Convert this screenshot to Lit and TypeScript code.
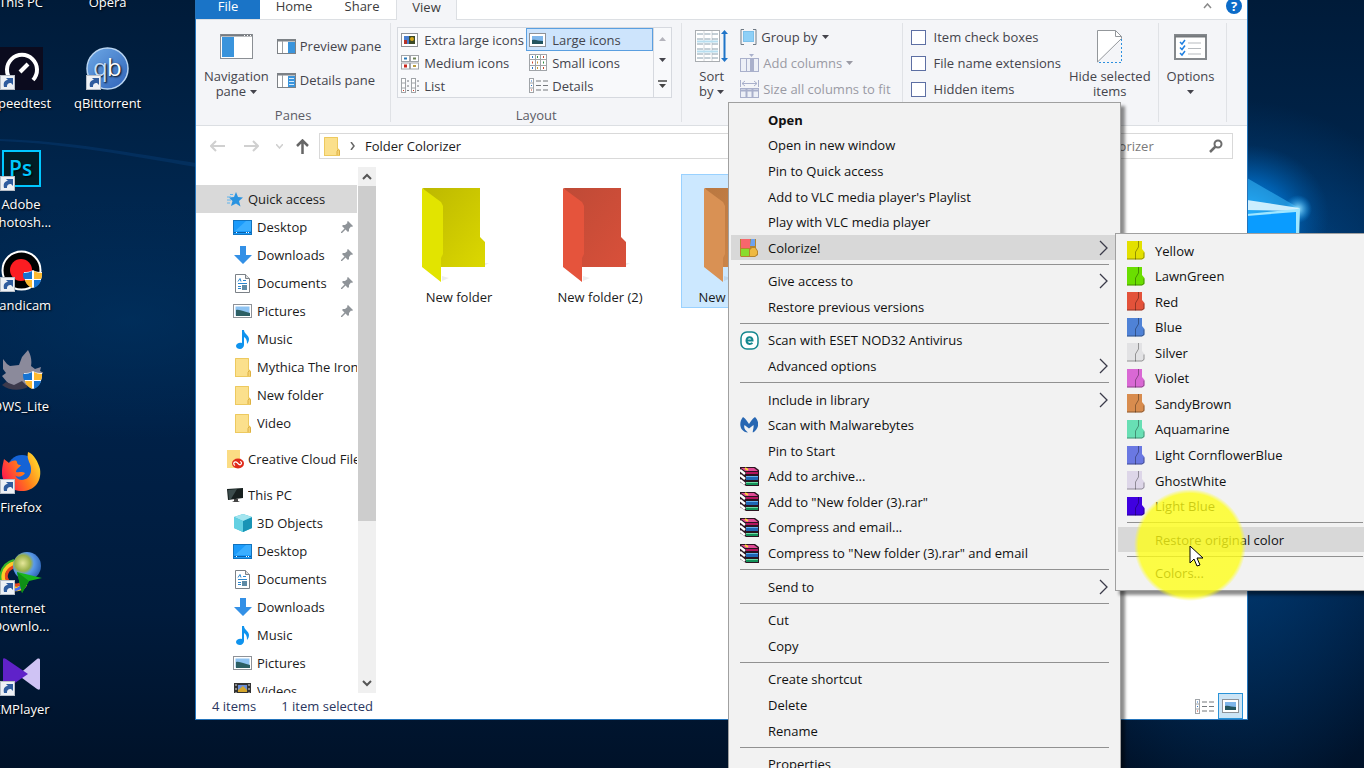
import { LitElement, html, css, svg, nothing, TemplateResult } from "lit";
import { customElement, property } from "lit/decorators.js";
import { classMap } from "lit/directives/class-map.js";

/* ---------- icons ---------- */

const pic = (w: number, h: number, body: unknown, vb = `0 0 ${w} ${h}`) =>
  html`<svg width=${w} height=${h} viewBox=${vb} aria-hidden="true">${body}</svg>`;

const shortcutArrow = svg`
  <rect x=".5" y="28.500" width="14" height="14" fill="#eef1f5" stroke="#b8bec6"/>
  <path d="M4 40c-1-5 1-7 4-7l-2-2h7v7l-2-2c-3 0-4 1-4 4z" fill="#2f5c9e"/>`;
const uacShield = svg`
  <path d="M33 21c3 2 6 2 9 2 0 8-2 13-9 16-7-3-9-8-9-16 3 0 6 0 9-2z" fill="#fff"/>
  <path d="M32 22v8h-8c-1-2-1-4-1-6 4 0 7-1 9-2zM34 31h7c-1 4-3 6-7 8z" fill="#1673d1"/>
  <path d="M34 22c2 1 5 2 8 2 0 2 0 4-1 6h-7zM32 31v8c-4-2-6-4-7-8z" fill="#fdb92e"/>`;

const desktopIcons: Record<string, unknown> = {
  speedtest: svg`<rect width="43" height="43" fill="#0b0b1e"/>
    <path d="M11 33a15 15 0 1 1 22 0" fill="none" stroke="#fff" stroke-width="4"/>
    <path d="M20 25l8-8" stroke="#fff" stroke-width="4"/>${shortcutArrow}`,
  qb: svg`<defs><linearGradient id="q" x1="0" y1="0" x2="1" y2="1"><stop offset="0" stop-color="#6ea9e6"/><stop offset="1" stop-color="#2e62b8"/></linearGradient></defs>
    <circle cx="21.500" cy="21.500" r="20.500" fill="url(#q)" stroke="#b9d5f2" stroke-width="1.500"/>
    <text x="7" y="29" font-family="Open Sans, sans-serif" font-size="24" fill="#c5dffa">q</text>
    <text x="21" y="29" font-family="Open Sans, sans-serif" font-size="24" fill="#fff">b</text>${shortcutArrow}`,
  ps: svg`<rect x="3" y="3" width="37" height="35" fill="#001d26" stroke="#00c8ff" stroke-width="2"/>
    <text x="9" y="28" font-family="Open Sans, sans-serif" font-weight="600" font-size="21" fill="#00c8ff">Ps</text>${shortcutArrow}`,
  bandicam: svg`<circle cx="21.500" cy="21.500" r="19" fill="#000" stroke="#fff" stroke-width="2"/>
    <circle cx="21" cy="21" r="11" fill="#fb1d22"/>${uacShield}${shortcutArrow}`,
  dws: svg`<path d="M3 9l4 5 3 2 9-1 3-8 6-7c3 5 4 11 3 16l4 3 6-2-1 4 4 2-9 3-4 7c-8 6-18 5-24-1L2 26l4-3-3-4z" fill="#8b8a9b"/>
    <path d="M2 35c8 6 18 6 26 2l-6-6-8 4-8-3z" fill="#3c3a4c"/>${uacShield}`,
  firefox: svg`<defs><linearGradient id="f" x1="0" y1="0.700" x2="1" y2="0.200"><stop offset="0" stop-color="#ff1450"/><stop offset=".5" stop-color="#ff7a1a"/><stop offset="1" stop-color="#ffe22e"/></linearGradient></defs>
    <circle cx="22" cy="19" r="15" fill="#1463d6"/>
    <path d="M4 8l5 4c4-3 7-3 8-1 0 3 3 3 4 3-2 3-5 4-5 7 3 1 6-1 9 1-3 5-9 4-10 2 3 8 15 6 16-4 1-8-5-10-3-19 6 2 10 10 12 17 2 14-7 22-18 22S2 32 2 22c0-6 1-9 2-14z" fill="url(#f)"/>${shortcutArrow}`,
  idm: svg`<defs><radialGradient id="i" cx=".35" cy=".4" r=".8"><stop offset="0" stop-color="#e6e79a"/><stop offset=".35" stop-color="#9ab04a"/><stop offset=".5" stop-color="#5a9ae8"/><stop offset="1" stop-color="#1d4fa0"/></radialGradient></defs>
    <path d="M16 11C2 14-1 26 7 33s16 3 18-1" fill="none" stroke="#ffc928" stroke-width="5"/>
    <path d="M17 14C6 16 4 25 9 30s11 3 14 0" fill="none" stroke="#e8461e" stroke-width="3"/>
    <path d="M14 8C0 12-4 28 6 36" fill="none" stroke="#35b52a" stroke-width="2"/>
    <path d="M4 32c4 7 12 8 18 2" fill="none" stroke="#4a6df0" stroke-width="3"/>
    <circle cx="27" cy="14" r="14" fill="url(#i)"/>
    <path d="M17 20l25 6-13 3-7 12z" fill="#18b51c"/><path d="M17 20l12 9-7 12z" fill="#0e8f16"/>${shortcutArrow}`,
  km: svg`<path d="M40 7v28c0 2-1 2-3 1L18 22 37 6c2-1 3 0 3 1z" fill="#cfc3f4"/>
    <path d="M3 7v28c0 2 1 2 3 1l22-15L6 6C4 5 3 5 3 7z" fill="#5f22c9"/>${shortcutArrow}`,
};

const tiny: Record<string, TemplateResult> = {
  star: pic(16, 16, svg`<path d="M9 1l2 5 5 .500-4 3.500 1.500 5.500L9 12.500 4 15l1.500-5L2 6.500 7 6z" fill="#2a93e0"/><path d="M0 6h4M0 9h4M0 12h3M3 3.500h3" stroke="#5fb4ee"/>`),
  desktop: pic(19, 15, svg`<rect x=".5" y=".5" width="18" height="14" fill="#1b9bfb" stroke="#1273be"/><path d="M1 12.500h17" stroke="#0a62ab"/><path d="M2 11L13 1h5v10z" fill="#3aaeff"/><path d="M3 12.500h1M13 12.500h1M15 12.500h1" stroke="#fff"/>`),
  down: pic(18, 18, svg`<path d="M6 0h6v9h6l-9 9-9-9h6z" fill="#3390e6"/>`),
  doc: pic(15, 19, svg`<path d="M.5.5h10l4 4v14H.5z" fill="#fff" stroke="#7b8187"/><path d="M10.500.5v4h4" fill="#ddd" stroke="#7b8187"/><path d="M3 7.500l2-3 1 3M8 6.500h3M3 9.500h9M3 12.500h3M3 14.500h3" stroke="#2b87cf" fill="none"/><rect x="7" y="11" width="5" height="5" fill="#5f8ba5"/>`),
  picture: pic(19, 14, svg`<rect x=".5" y=".5" width="18" height="13" fill="#fff" stroke="#8e9298"/><rect x="2.500" y="2.500" width="14" height="9" fill="#8ec3f2"/><path d="M3 6c4-1 8 2 14 3v3H3z" fill="#2c5f64"/>`),
  music: pic(13, 19, svg`<path d="M6 0h2c0 4 5 5 5 9 0 2-1 4-2 5 0-4-1-6-3-7v8c0 2-2 4-4 4s-4-1-4-3 3-4 6-3z" fill="#0f93ee"/>`),
  folder: pic(16, 19, svg`<path d="M0 0h14v11l2 2v6H0z" fill="#fbe08c"/><path d="M13 18.500v-4l1-2 1.500 1v5" fill="#f6d374" stroke="#dcb044"/><path d="M.5 18.500V.5h13v12M0 18.500h16" fill="none" stroke="#edc95f"/>`),
  cloud: pic(17, 19, svg`<path d="M0 0h13v11l1 7H0z" fill="#fbdc84"/><ellipse cx="11" cy="13.500" rx="6" ry="5" fill="#e02a1a"/><path d="M8 15.500c-3-2 0-5 2-3l2 2c2 1 4-2 1-3" fill="none" stroke="#fff" stroke-width="1.200"/>`),
  pc: pic(17, 15, svg`<path d="M0 1l16-1v10L1 12z" fill="#17201f"/><path d="M1 2l9-1-6 10H2z" fill="#3c4c4c"/><path d="M7 11h4v2l2 1H5l2-1z" fill="#444"/>`),
  cube: pic(18, 18, svg`<path d="M9 0l9 3v11l-9 4-9-4V3z" fill="#35bcd4"/><path d="M9 7l9-4v11l-9 4z" fill="#1994b5"/><path d="M9 0l9 3-9 4-9-4z" fill="#a4e5ef"/><path d="M0 3l9 4v11l-9-4z" fill="#63d0e2"/>`),
  video: pic(17, 17, svg`<rect width="17" height="17" fill="#333"/><rect x="4" y="2" width="9" height="7" fill="#6a8ed8"/><path d="M4 7l5-4 4 4v2H4z" fill="#d3a52c"/><rect x="4" y="10" width="9" height="6" fill="#777"/><path d="M2 1v16M15 1v16" stroke="#ddd" stroke-dasharray="2 2"/>`),
  pin: pic(12, 12, svg`<path d="M7 0l5 5-1 1-1-.5L8 8l0 2-1 1-2.500-2.500L1 12l-1 0 0-1 3.500-3.500L1 5l1-1h2l2.500-2L6 1z" fill="#8f9499"/>`),
};

const ribbonIcons: Record<string, TemplateResult> = {
  nav: pic(33, 25, svg`<rect x=".5" y=".5" width="32" height="24" fill="#fff" stroke="#8b8f94"/><path d="M1 1.500h31" stroke="#777b80" stroke-width="2"/><rect x="2" y="3" width="12" height="20" fill="#3a94dc"/><path d="M24 1.500h7" stroke="#fff" stroke-dasharray="1 2"/>`),
  preview: pic(19, 15, svg`<rect x=".5" y=".5" width="18" height="14" fill="#fff" stroke="#7d8186"/><path d="M0 1.500h19" stroke="#7d8186" stroke-width="2"/><path d="M5.500 2v12" stroke="#9a9ea3"/><rect x="11" y="3" width="7" height="11" fill="#3a94dc"/>`),
  details: pic(19, 15, svg`<rect x=".5" y=".5" width="18" height="14" fill="#fff" stroke="#7d8186"/><path d="M0 1.500h19" stroke="#7d8186" stroke-width="2"/><path d="M5.500 2v12" stroke="#9a9ea3"/><rect x="11" y="3" width="7" height="11" fill="#3a94dc"/><path d="M12 5.500h5M12 8.500h5M12 11.500h5" stroke="#d5e9fa"/>`),
  xl: pic(17, 14, svg`<rect x=".5" y=".5" width="16" height="13" fill="#fff" stroke="#8e9298"/><rect x="3" y="3" width="11" height="8" fill="#4a7fd0"/><rect x="3" y="7" width="3" height="4" fill="#b5322a"/><rect x="8" y="3" width="6" height="8" fill="#3c4a27"/><circle cx="11" cy="6" r="2" fill="#d6a81c"/>`),
  lg: pic(17, 14, svg`<rect x=".5" y=".5" width="16" height="13" fill="#fff" stroke="#8e9298"/><rect x="3" y="3" width="11" height="8" fill="#7fb6ea"/><path d="M3 7c4-1 6 1 11 1v3H3z" fill="#24555e"/>`),
  md: pic(18, 15, svg`<g fill="#fff" stroke="#a0a4a8"><rect x=".5" y=".5" width="8" height="6"/><rect x="9.500" y=".5" width="8" height="6"/><rect x=".5" y="8" width="8" height="6"/><rect x="9.500" y="8" width="8" height="6"/></g><path d="M3 3.500h3" stroke="#2878b8" stroke-width="2"/><path d="M12 3.500h3" stroke="#6a7f54" stroke-width="2"/><path d="M3 11h3" stroke="#c9241a" stroke-width="3"/><path d="M12 11h3" stroke="#b99a3c" stroke-width="2"/>`),
  sm: pic(18, 17, svg`<g fill="#fff" stroke="#a0a4a8"><rect x=".5" y=".5" width="17" height="16"/><path d="M6.500 0v17M11.500 0v17M0 5.500h18M0 11.500h18"/></g><g><path d="M3 3h1M3 14h1" stroke="#2a75c8" stroke-width="2"/><path d="M8 3h1M14 8.500h1" stroke="#2d8a41" stroke-width="2"/><path d="M14 3h1M3 8.500h1M14 14h1" stroke="#c8402a" stroke-width="2"/><path d="M8 8.500h1M8 14h1" stroke="#c4972e" stroke-width="2"/></g>`),
  list: pic(18, 15, svg`<g fill="#fff" stroke="#a0a4a8"><rect x=".5" y=".5" width="4" height="14"/><rect x="10.500" y=".5" width="4" height="14"/><path d="M0 5h5M0 10h5M10 5h5M10 10h5"/></g><path d="M6 3h2M6 8h2M6 12.500h2M16 3h2M16 8h2M16 12.500h2" stroke="#74787c"/><path d="M2 12.500h1M12 12.500h1" stroke="#c8402a"/>`),
  dt: pic(19, 15, svg`<rect x=".5" y=".5" width="4" height="14" fill="#fff" stroke="#a0a4a8"/><path d="M0 5h5M0 10h5" stroke="#a0a4a8"/><path d="M7 3h5M14 3h5M7 7.500h5M14 7.500h5M7 12h5M14 12h5" stroke="#74787c"/><path d="M2 3h1M2 7.500h1" stroke="#2a75c8"/><path d="M2 12h1" stroke="#c8402a"/>`),
  sort: pic(33, 33, svg`<rect x=".5" y=".5" width="24" height="31" fill="#fff" stroke="#a9adb1"/><path d="M9 1v30M17 1v30" stroke="#d2d6da"/><path d="M2 4h21M2 9h21M2 14h21M2 19h21M2 24h21M2 28h21" stroke="#8aa0ae" stroke-dasharray="6 1.500"/><path d="M2 11.500h21M2 21.500h21" stroke="#b6def0" stroke-width="2"/><path d="M29.500 3v27" stroke="#1f74c8" stroke-width="2"/><path d="M26 4l3.500-4L33 4zM26 28l3.500 4 3.500-4z" fill="#1f74c8"/>`),
  group: pic(17, 16, svg`<path d="M4 .5H1v15h3M13 .5h3v15h-3" fill="none" stroke="#6f7a85"/><rect x="3.500" y="2.500" width="10" height="10" fill="#8ed0f7" stroke="#7cc0ea"/>`),
  addcol: pic(19, 18, svg`<rect x=".5" y="4.500" width="18" height="13" fill="#edf0f7" stroke="#a9b0cb"/><path d="M6.500 4v14M12.500 4v14" stroke="#a9b0cb"/><rect x="10" y="4" width="4" height="14" fill="#a9b0cb"/><path d="M9 0h5l-2.500 3z" fill="#a9b0cb"/>`),
  size: pic(19, 19, svg`<path d="M.5 0v7M18.500 0v7M2 3.500h15M5 1L2 3.500 5 6M14 1l3 2.500L14 6" fill="none" stroke="#a9b0cb"/><rect x=".5" y="8.500" width="18" height="9" fill="#edf0f7" stroke="#a9b0cb"/><path d="M0 10.500h19M6.500 9v9M12.500 9v9" stroke="#a9b0cb" stroke-width="2"/>`),
  hide: pic(25, 33, svg`<path d="M.5 32V.5h18l6 6v2L.5 32" fill="#fff" stroke="#93979b"/><path d="M18.500.5v6h6" fill="none" stroke="#93979b"/><path d="M24.500 9v23.500H1" fill="none" stroke="#2b8fdf" stroke-dasharray="2 2"/>`),
  options: pic(33, 26, svg`<rect x="1" y="1" width="31" height="24" fill="#fff" stroke="#84888c" stroke-width="2"/><path d="M1 2.500h31" stroke="#74787c" stroke-width="2"/><path d="M14 9h13M14 14.500h13M14 20h13" stroke="#b7bbbf"/><path d="M6 8l2 2 3-4M6 13.500l2 2 3-4M6 19l2 2 3-4" fill="none" stroke="#1f7fe0" stroke-width="1.500"/>`),
};

const caret = pic(7, 4, svg`<path d="M0 0h7L3.500 4z" fill="currentColor"/>`);

const bigFolder = (face: string, shade: string, light: string) =>
  pic(68, 97, svg`
    <defs><linearGradient id="g" x1="0" y1="0" x2="1" y2="1"><stop offset="0" stop-color=${shade}/><stop offset="1" stop-color=${light}/></linearGradient></defs>
    <path d="M21 94l7-3-7-2zM63 79l5-3h-5z" fill="#000" opacity=".07"/>
    <path d="M2 1h57v49l5 5v25H20z" fill="url(#g)"/>
    <path d="M1 1l19 14 2 4v48l-2 4v24L1 80z" fill=${face}/>`);

const colorTag = (c: string) =>
  pic(18, 19, svg`<path d="M0 0h15v8l2.500 3v6L15 18.500H0z" fill=${c}/><path d="M11.500 0v6l-3 5v7.500M17 11.500v5l-2 1.500M0 18h15" fill="none" stroke="#000" opacity=".35"/>`);

const menuIcons: Record<string, TemplateResult> = {
  colorize: pic(18, 19, svg`<path d="M0 1h16v9l2 3v4l-3 2H1l-1-1z" fill="#b6852e"/><rect x="1" y="1" width="9" height="9" fill="#f7666c"/><rect x="1" y="11" width="8" height="7" fill="#8adc2e"/><path d="M11 1h4v7h-5z" fill="#6da2f0"/><path d="M10 12l2-2h3l2 3v3l-2 2h-5z" fill="#efb941"/>`),
  eset: pic(19, 19, svg`<rect x="1" y="1" width="17" height="17" rx="6" fill="#fff" stroke="#14878e" stroke-width="1.500"/><path d="M6.500 9.500h6c0-4-6-4.500-6 0 0 4 4 4 6 2.500" fill="none" stroke="#14878e" stroke-width="2"/>`),
  mwb: pic(18, 16, svg`<path d="M3 0c3 2 4 4 6 7 2-3 3-5 6-7 5 5 4 12-2 15.500-1-.5 1-4 .5-7.500L9 11.500 4.500 8c-1 3 .5 5 3.500 7.500C0 15-2 6 3 0z" fill="#2867b2"/>`),
  rar: pic(19, 19, svg`
    <path d="M0 0h15l4 3v16H6l-6-4z" fill="#2a1420"/>
    <path d="M1 1h13l4 3H5z" fill="#e04a96"/><path d="M6 5h12v2H6z" fill="#b3145e"/>
    <path d="M6 9h12v1H6z" fill="#63b0ee"/><path d="M6 10h12v3H6z" fill="#1f66b4"/>
    <path d="M6 15h12v1H6z" fill="#6fdca6"/><path d="M6 16h12v2H6z" fill="#149259"/>
    <path d="M0 3l5 4M0 8l5 4M0 13l5 4" stroke="#fff" stroke-width="2.500"/>
    <path d="M5 1l3 2" stroke="#ffd83a" stroke-width="2"/>`),
};

/* ---------- popup menu ---------- */

interface MenuEntry {
  label?: string;
  icon?: TemplateResult;
  sub?: boolean;
  bold?: boolean;
  hot?: boolean;
}

@customElement("popup-menu")
export class PopupMenu extends LitElement {
  @property({ attribute: false }) entries: MenuEntry[] = [];

  static styles = css`
    :host {
      display: block;
      box-sizing: border-box;
      background: #f2f2f2;
      border: 1px solid #a0a0a0;
      box-shadow: 4px 4px 3px rgba(0, 0, 0, 0.45);
      padding: 4px 2px;
    }
    .list {
      display: flex;
      flex-direction: column;
      height: 100%;
      margin: 0;
      padding: 0;
      list-style: none;
    }
    .entry {
      flex: 1;
      display: flex;
    }
    .rule {
      flex: none;
      height: 8px;
      box-sizing: border-box;
      display: flex;
      align-items: center;
      padding: 0 9px;
    }
    .line {
      flex: 1;
      height: 1px;
      background: #919191;
    }
    .item {
      flex: 1;
      display: flex;
      align-items: center;
      border: 0;
      margin: 0;
      padding: 0 9px;
      background: transparent;
      font: inherit;
      color: #111;
      text-align: left;
      white-space: nowrap;
    }
    .hot {
      background: #d8d8d8;
    }
    .bold {
      font-weight: 700;
    }
    .icon {
      width: 28px;
      flex: none;
      display: flex;
      align-items: center;
    }
    .text {
      flex: 1;
    }
  `;

  render() {
    return html`<ul class="list" role="menu">
      ${this.entries.map((e) =>
        e.label
          ? html`<li class="entry" role="none">
              <button role="menuitem" class=${classMap({ item: true, hot: !!e.hot, bold: !!e.bold })}>
                <span class="icon">${e.icon ?? nothing}</span>
                <span class="text">${e.label}</span>
                ${e.sub ? pic(10, 16, svg`<path d="M1 1l7 7-7 7" fill="none" stroke="#3b3b4a" stroke-width="1.300"/>`) : nothing}
              </button>
            </li>`
          : html`<li class="rule" role="separator"><span class="line"></span></li>`
      )}
    </ul>`;
  }
}

const rule: MenuEntry = {};

const mainMenu: MenuEntry[] = [
  { label: "Open", bold: true },
  { label: "Open in new window" },
  { label: "Pin to Quick access" },
  { label: "Add to VLC media player's Playlist" },
  { label: "Play with VLC media player" },
  { label: "Colorize!", icon: menuIcons.colorize, sub: true, hot: true },
  rule,
  { label: "Give access to", sub: true },
  { label: "Restore previous versions" },
  rule,
  { label: "Scan with ESET NOD32 Antivirus", icon: menuIcons.eset },
  { label: "Advanced options", sub: true },
  rule,
  { label: "Include in library", sub: true },
  { label: "Scan with Malwarebytes", icon: menuIcons.mwb },
  { label: "Pin to Start" },
  { label: "Add to archive...", icon: menuIcons.rar },
  { label: 'Add to "New folder (3).rar"', icon: menuIcons.rar },
  { label: "Compress and email...", icon: menuIcons.rar },
  { label: 'Compress to "New folder (3).rar" and email', icon: menuIcons.rar },
  rule,
  { label: "Send to", sub: true },
  rule,
  { label: "Cut" },
  { label: "Copy" },
  rule,
  { label: "Create shortcut" },
  { label: "Delete" },
  { label: "Rename" },
  rule,
  { label: "Properties" },
];

const colorMenu: MenuEntry[] = [
  ...[
    ["Yellow", "#e3e000"],
    ["LawnGreen", "#6ade00"],
    ["Red", "#e3523a"],
    ["Blue", "#4f82d6"],
    ["Silver", "#e2e2e4"],
    ["Violet", "#d968d4"],
    ["SandyBrown", "#d88c4e"],
    ["Aquamarine", "#68dfb4"],
    ["Light CornflowerBlue", "#6a78e2"],
    ["GhostWhite", "#ddd6e8"],
    ["Light Blue", "#3f00e0"],
  ].map(([label, c]) => ({ label, icon: colorTag(c) })),
  rule,
  { label: "Restore original color", hot: true },
  rule,
  { label: "Colors..." },
];

/* ---------- file explorer window ---------- */

interface NavRow {
  label: string;
  icon: string;
  top?: boolean;
  pinned?: boolean;
  gap?: boolean;
  selected?: boolean;
}

const navRows: NavRow[] = [
  { label: "Quick access", icon: "star", top: true, selected: true },
  { label: "Desktop", icon: "desktop", pinned: true },
  { label: "Downloads", icon: "down", pinned: true },
  { label: "Documents", icon: "doc", pinned: true },
  { label: "Pictures", icon: "picture", pinned: true },
  { label: "Music", icon: "music" },
  { label: "Mythica The Iron", icon: "folder" },
  { label: "New folder", icon: "folder" },
  { label: "Video", icon: "folder" },
  { label: "Creative Cloud Files", icon: "cloud", top: true, gap: true },
  { label: "This PC", icon: "pc", top: true, gap: true },
  { label: "3D Objects", icon: "cube" },
  { label: "Desktop", icon: "desktop" },
  { label: "Documents", icon: "doc" },
  { label: "Downloads", icon: "down" },
  { label: "Music", icon: "music" },
  { label: "Pictures", icon: "picture" },
  { label: "Videos", icon: "video" },
];

const views = [
  ["Extra large icons", "xl"],
  ["Large icons", "lg"],
  ["Medium icons", "md"],
  ["Small icons", "sm"],
  ["List", "list"],
  ["Details", "dt"],
];

@customElement("explorer-window")
export class ExplorerWindow extends LitElement {
  static styles = css`
    :host {
      display: flex;
      flex-direction: column;
      box-sizing: border-box;
      background: #fff;
      border: 1px solid #2474bb;
      border-top: 0;
      overflow: hidden;
      color: #1b1b1b;
    }
    button {
      font: inherit;
      color: inherit;
      border: 0;
      margin: 0;
      padding: 0;
      background: transparent;
    }
    svg {
      flex: none;
      display: block;
    }
    .tabs {
      display: flex;
      height: 26px;
      margin-top: -7px;
      flex: none;
      color: #3c3c3c;
    }
    .tab {
      width: 68px;
      line-height: 26px;
    }
    .file {
      width: 64px;
      background: #1a74c7;
      color: #fff;
    }
    .current {
      width: 61px;
      box-sizing: border-box;
      background: #f4f5f8;
      border: 1px solid #dcdfe3;
      border-bottom: 0;
      margin-bottom: -1px;
      position: relative;
    }
    .tabtools {
      margin-left: auto;
      display: flex;
      align-items: center;
      gap: 14px;
      padding-right: 5px;
    }
    .help {
      width: 16px;
      height: 16px;
      border-radius: 50%;
      background: #0b6bc8;
      color: #fff;
      font-weight: 700;
      line-height: 16px;
      text-align: center;
    }
    .ribbon {
      display: flex;
      flex: none;
      height: 107px;
      box-sizing: border-box;
      background: #f4f5f8;
      border: 1px solid #dcdfe3;
      border-width: 1px 0;
      padding: 3px 0;
      color: #44444c;
    }
    .group {
      display: flex;
      flex-direction: column;
      border-right: 1px solid #e0e2e6;
    }
    .controls {
      flex: 1;
      display: flex;
    }
    .caption {
      text-align: center;
      line-height: 14px;
      color: #5c5c66;
    }
    .big {
      display: flex;
      flex-direction: column;
      align-items: center;
      line-height: 15px;
      padding: 7px 8px 0;
      gap: 6px;
      white-space: nowrap;
    }
    .sort {
      padding-left: 13px;
      padding-right: 12px;
    }
    .hide {
      padding-right: 11px;
    }
    .big .pict {
      height: 33px;
      display: flex;
      align-items: center;
    }
    .withcaret {
      display: flex;
      align-items: center;
      gap: 4px;
      color: inherit;
      justify-content: center;
    }
    .panes {
      display: flex;
      flex-direction: column;
      gap: 16px;
      padding: 14px 9px 0 0;
    }
    .row {
      display: flex;
      align-items: center;
      gap: 4px;
      height: 18px;
      line-height: 18px;
      white-space: nowrap;
    }
    .gallery {
      display: flex;
      border: 1px solid #d6d9df;
      margin: 4px 9px 0 6px;
      height: 69px;
      background: #f8f9fb;
    }
    .cells {
      display: grid;
      grid-template-columns: 128px 127px;
      grid-template-rows: repeat(3, 23px);
    }
    .cell {
      display: grid;
      grid-template-columns: 19px 1fr;
      justify-items: start;
      align-items: center;
      gap: 4px;
      padding: 0 3px;
      box-sizing: border-box;
      text-align: left;
      white-space: nowrap;
    }
    .chosen {
      background: #cde4fc;
      border: 1px solid #5a9fe0;
      padding: 0 2px;
    }
    .spin {
      display: grid;
      width: 17px;
      border-left: 1px solid #d6d9df;
      place-items: center;
    }
    .stack {
      display: flex;
      flex-direction: column;
      gap: 8px;
      padding: 5px 11px 0 0;
    }
    .off {
      color: #9a9aa4;
    }
    .checks {
      display: flex;
      flex-direction: column;
      gap: 8px;
      padding: 5px 0 0 8px;
    }
    .check {
      display: flex;
      align-items: center;
      gap: 8px;
      height: 18px;
      line-height: 18px;
      white-space: nowrap;
    }
    .box {
      appearance: none;
      width: 15px;
      height: 15px;
      margin: 0;
      border: 1px solid #5d6fa3;
      background: #fff;
    }
    .show {
      width: 255px;
    }
    .show .controls {
      justify-content: space-between;
    }
    .options {
      width: 67px;
      align-items: flex-start;
    }
    .address {
      display: flex;
      flex: none;
      align-items: center;
      padding: 7px 14px;
      gap: 10px;
    }
    .arrows {
      display: grid;
      grid-template-columns: 34px 32px 20px 13px;
      align-items: center;
      justify-items: start;
    }
    .crumbs {
      flex: 1;
      height: 26px;
      box-sizing: border-box;
      border: 1px solid #d9d9d9;
      display: flex;
      align-items: center;
      gap: 10px;
      padding: 0 4px;
      min-width: 0;
    }
    .search {
      width: 230px;
      height: 26px;
      box-sizing: border-box;
      border: 1px solid #d9d9d9;
      display: flex;
      align-items: center;
      padding: 0 9px;
    }
    .query {
      flex: 1;
      min-width: 0;
      border: 0;
      padding: 0;
      font: inherit;
      background: transparent;
    }
    .query::placeholder {
      color: #7a7a7a;
      opacity: 1;
    }
    .body {
      flex: 1;
      display: flex;
      min-height: 0;
    }
    .nav {
      width: 162px;
      overflow: hidden;
      padding-top: 19px;
      box-sizing: border-box;
    }
    .place {
      display: flex;
      align-items: center;
      height: 28px;
      width: 161px;
      padding: 0 4px 0 36px;
      box-sizing: border-box;
      text-align: left;
      white-space: nowrap;
    }
    .place.top {
      padding-left: 30px;
    }
    .place.gap {
      margin-top: 8px;
    }
    .place.selected {
      background: #d9d9d9;
    }
    .glyph {
      width: 21px;
      flex: none;
      display: flex;
      justify-content: center;
    }
    .top .glyph {
      width: 18px;
    }
    .name {
      flex: 1;
      margin-left: 4px;
      margin-right: -4px;
      overflow: hidden;
    }
    .scroll {
      width: 18px;
      display: flex;
      flex-direction: column;
      align-items: center;
      background: #f0f0f0;
      margin-top: 1px;
    }
    .knob {
      height: 19px;
      display: flex;
      align-items: center;
    }
    .thumb {
      width: 18px;
      flex: 335;
      background: #cdcdcd;
    }
    .track {
      flex: 153;
    }
    .files {
      flex: 1;
      display: flex;
      gap: 21px;
      padding: 8px 0 0 23px;
      align-items: flex-start;
    }
    .tile {
      width: 120px;
      height: 134px;
      box-sizing: border-box;
      border: 1px solid transparent;
      flex: none;
      display: flex;
      flex-direction: column;
      align-items: center;
      padding: 12px 0 0;
      gap: 4px;
      line-height: 18px;
    }
    .tile.selected {
      background: #cce8ff;
      border-color: #99d1ff;
    }
    .status {
      display: flex;
      flex: none;
      align-items: center;
      height: 26px;
      padding: 0 4px 0 16px;
      gap: 25px;
      color: #2a3660;
    }
    .modes {
      margin-left: auto;
      display: flex;
      align-items: center;
      gap: 1px;
    }
    .mode {
      width: 25px;
      height: 26px;
      box-sizing: border-box;
      display: grid;
      place-items: center;
    }
    .on {
      background: #cce4f5;
      border: 1px solid #2a93d8;
    }
  `;

  render() {
    return html`
      <div class="tabs" role="tablist">
        <button class="tab file" role="tab">File</button>
        <button class="tab" role="tab">Home</button>
        <button class="tab" role="tab">Share</button>
        <button class="tab current" role="tab" aria-selected="true">View</button>
        <div class="tabtools">
          <button aria-label="Minimize the Ribbon">${pic(9, 6, svg`<path d="M1 5l3.500-4L8 5" fill="none" stroke="#8a8a8a" stroke-width="1.500"/>`)}</button>
          <button class="help" aria-label="Help">?</button>
        </div>
      </div>

      <div class="ribbon">
        <div class="group">
          <div class="controls">
            <button class="big">
              <span class="pict">${ribbonIcons.nav}</span>
              <span>Navigation<span class="withcaret">pane ${caret}</span></span>
            </button>
            <div class="panes">
              <button class="row">${ribbonIcons.preview} Preview pane</button>
              <button class="row">${ribbonIcons.details} Details pane</button>
            </div>
          </div>
          <div class="caption">Panes</div>
        </div>

        <div class="group">
          <div class="controls">
            <div class="gallery">
              <div class="cells">
                ${views.map(
                  ([label, icon]) => html`<button class=${classMap({ cell: true, chosen: icon === "lg" })}>
                    ${ribbonIcons[icon]} <span>${label}</span>
                  </button>`
                )}
              </div>
              <div class="spin">
                <button class="off" aria-label="Scroll up">${pic(7, 4, svg`<path d="M0 4h7L3.500 0z" fill="#b4b4bc"/>`)}</button>
                <button aria-label="Scroll down">${caret}</button>
                <button aria-label="More">${pic(9, 8, svg`<path d="M0 1h9" stroke="#444" stroke-width="1.500"/><path d="M1 4h7L4.500 8z" fill="#444"/>`)}</button>
              </div>
            </div>
          </div>
          <div class="caption">Layout</div>
        </div>

        <div class="group">
          <div class="controls">
            <button class="big sort">
              <span class="pict">${ribbonIcons.sort}</span>
              <span>Sort<span class="withcaret">by ${caret}</span></span>
            </button>
            <div class="stack">
              <button class="row">${ribbonIcons.group} Group by ${caret}</button>
              <button class="row off">${ribbonIcons.addcol} Add columns ${caret}</button>
              <button class="row off">${ribbonIcons.size} Size all columns to fit</button>
            </div>
          </div>
        </div>

        <div class="group show">
          <div class="controls">
            <div class="checks">
              <label class="check"><input class="box" type="checkbox" />Item check boxes</label>
              <label class="check"><input class="box" type="checkbox" />File name extensions</label>
              <label class="check"><input class="box" type="checkbox" />Hidden items</label>
            </div>
            <button class="big hide">
              <span class="pict">${ribbonIcons.hide}</span>
              <span>Hide selected<br />items</span>
            </button>
          </div>
        </div>

        <div class="group options">
          <button class="big">
            <span class="pict">${ribbonIcons.options}</span>
            <span>Options<span class="withcaret">${pic(7, 15, svg`<path d="M0 6h7l-3.500 4z" fill="currentColor"/>`)}</span></span>
          </button>
        </div>
      </div>

      <div class="address">
        <div class="arrows">
          <button aria-label="Back">${pic(15, 12, svg`<path d="M15 6H1M6 1L1 6l5 5" fill="none" stroke="#d0d0d0" stroke-width="2"/>`)}</button>
          <button aria-label="Forward">${pic(15, 12, svg`<path d="M0 6h14M9 1l5 5-5 5" fill="none" stroke="#d0d0d0" stroke-width="2"/>`)}</button>
          <button aria-label="Recent locations">${pic(7, 5, svg`<path d="M0 0l3.500 4L7 0" fill="none" stroke="#d0d0d0" stroke-width="1.500"/>`)}</button>
          <button aria-label="Up">${pic(13, 15, svg`<path d="M6.500 15V2M1 7l5.500-5.500L12 7" fill="none" stroke="#666" stroke-width="2.500"/>`)}</button>
        </div>
        <div class="crumbs">
          ${tiny.folder}
          ${pic(5, 8, svg`<path d="M1 0l3 4-3 4" fill="none" stroke="#666" stroke-width="1.500"/>`)}
          <button>Folder Colorizer</button>
        </div>
        <label class="search">
          <input class="query" type="search" placeholder="Search Folder Colorizer" aria-label="Search Folder Colorizer" />
          ${pic(14, 14, svg`<circle cx="9" cy="5" r="3.500" fill="none" stroke="#6c6c6c" stroke-width="2"/><path d="M6.500 7.500L1 13" stroke="#6c6c6c" stroke-width="2.500"/>`)}
        </label>
      </div>

      <div class="body">
        <nav class="nav">
          ${navRows.map(
            (r) => html`<button class=${classMap({ place: true, top: !!r.top, gap: !!r.gap, selected: !!r.selected })}>
              <span class="glyph">${tiny[r.icon]}</span>
              <span class="name">${r.label}</span>
              ${r.pinned ? tiny.pin : nothing}
            </button>`
          )}
        </nav>
        <div class="scroll">
          <span class="knob">${pic(10, 7, svg`<path d="M1 6l4-4 4 4" fill="none" stroke="#555" stroke-width="2"/>`)}</span>
          <span class="thumb"></span>
          <span class="track"></span>
          <span class="knob">${pic(10, 7, svg`<path d="M1 1l4 4 4-4" fill="none" stroke="#555" stroke-width="2"/>`)}</span>
        </div>
        <div class="files">
          <button class="tile"><folder-art face="#e2e400" shade="#bcb800" light="#dcd800"></folder-art>New folder</button>
          <button class="tile"><folder-art face="#e5543c" shade="#be4a36" light="#d9503a"></folder-art>New folder (2)</button>
          <button class="tile selected"><folder-art face="#d99154" shade="#b97740" light="#d38a4c"></folder-art>New folder (3)</button>
        </div>
      </div>

      <div class="status">
        <span>4 items</span>
        <span>1 item selected</span>
        <div class="modes">
          <button class="mode" aria-label="Details view">${ribbonIcons.dt}</button>
          <button class="mode on" aria-label="Large icons view">${ribbonIcons.lg}</button>
        </div>
      </div>
    `;
  }
}

@customElement("folder-art")
export class FolderArt extends LitElement {
  @property() face = "";
  @property() shade = "";
  @property() light = "";

  static styles = css`
    :host {
      display: block;
      height: 97px;
      margin-right: 9px;
    }
    svg {
      display: block;
    }
  `;

  render() {
    return bigFolder(this.face, this.shade, this.light);
  }
}

/* ---------- desktop ---------- */

const shortcuts: [string, string][] = [
  ["", "This PC"],
  ["speedtest", "Speedtest"],
  ["ps", "Adobe Photosh..."],
  ["bandicam", "Bandicam"],
  ["dws", "DWS_Lite"],
  ["firefox", "Firefox"],
  ["idm", "Internet Downlo..."],
  ["km", "KMPlayer"],
];
const shortcuts2: [string, string][] = [
  ["", "Opera"],
  ["qb", "qBittorrent"],
];

@customElement("app-root")
export class AppRoot extends LitElement {
  static styles = css`
    :host {
      display: block;
      position: relative;
      height: 100vh;
      overflow: hidden;
      font: 13px/18px "Open Sans", "Noto Sans", sans-serif;
      background:
        radial-gradient(circle 230px at calc(100% - 130px) 330px, rgba(0, 116, 214, 0.85), rgba(0, 84, 160, 0.45) 55%, transparent),
        radial-gradient(ellipse 200px 320px at calc(100% - 130px) 500px, rgba(0, 84, 160, 0.6), transparent),
        radial-gradient(ellipse 260px 120px at 130px 320px, rgba(0, 52, 100, 0.6), transparent),
        linear-gradient(180deg, #001b39, #00264e 26%, #002148 55%, #001b3c 80%, #001229);
    }
    .rays {
      position: absolute;
      right: 0;
      top: 140px;
    }
    .beam {
      position: absolute;
      left: 0;
      top: 130px;
    }
    .icons {
      position: absolute;
      left: -22px;
      top: -54px;
      display: flex;
    }
    .column {
      display: grid;
      grid-auto-rows: 101px;
      align-content: start;
      width: 86px;
    }
    .shortcut {
      display: flex;
      flex-direction: column;
      align-items: center;
      gap: 4px;
      padding: 0 10px;
      color: #fff;
      text-align: center;
      text-decoration: none;
      text-shadow: 1px 1px 2px #000;
    }
    .art {
      height: 43px;
      width: 43px;
      flex: none;
    }
    .window {
      position: absolute;
      left: 195px;
      right: 116px;
      top: 0;
      bottom: 48px;
    }
    .menu {
      position: absolute;
      left: 728px;
      top: 102px;
      width: 393px;
      height: 680px;
    }
    .submenu {
      position: absolute;
      left: 1115px;
      top: 233px;
      width: 260px;
      height: 358px;
    }
    .spot {
      position: absolute;
      left: 1134px;
      top: 489px;
      width: 112px;
      height: 112px;
      border-radius: 50%;
      background: radial-gradient(closest-side, rgba(255, 255, 20, 0.78) 92%, rgba(255, 255, 20, 0));
      pointer-events: none;
    }
    .cursor {
      position: absolute;
      left: 1189px;
      top: 545px;
    }
  `;

  private column(items: [string, string][]) {
    return html`<div class="column">
      ${items.map(
        ([icon, label]) => html`<a class="shortcut" href="#">
          <span class="art">${icon ? pic(43, 43, desktopIcons[icon]) : nothing}</span>
          <span>${label}</span>
        </a>`
      )}
    </div>`;
  }

  render() {
    return html`
      <div class="beam">${pic(196, 40, svg`<path d="M0 9c70 2 130 14 196 24v4C130 26 70 14 0 11z" fill="#0a4a8c" opacity=".3"/>`)}</div>
      <div class="rays">
        ${pic(
          117,
          100,
          svg`<defs><radialGradient id="r" cx="0" cy=".75" r=".7"><stop offset="0" stop-color="#0aa0ff"/><stop offset=".5" stop-color="#0078d8" stop-opacity=".6"/><stop offset="1" stop-color="#0060b0" stop-opacity="0"/></radialGradient>
          <radialGradient id="s" cx=".5" cy=".5" r=".5"><stop offset="0" stop-color="#9fe6ff"/><stop offset="1" stop-color="#0aa0ff" stop-opacity="0"/></radialGradient></defs>
          <rect width="117" height="100" fill="url(#r)"/>
          <path d="M0 38l52 30 0 4L0 78z" fill="#3ec1ff" opacity=".5"/>
          <circle cx="51" cy="69" r="14" fill="url(#s)"/>
          <path d="M0 60l52 8v3L0 70z" fill="#dff6ff" opacity=".9"/>
          <path d="M0 75l49-4v29H0z" fill="#0a9cff"/>
          <path d="M0 74l50-5 3-1-1 32h-3V72L0 76z" fill="#9fe6ff"/>`
        )}
      </div>
      <div class="icons">${this.column(shortcuts)}${this.column(shortcuts2)}</div>
      <explorer-window class="window"></explorer-window>
      <popup-menu class="menu" .entries=${mainMenu}></popup-menu>
      <popup-menu class="submenu" .entries=${colorMenu}></popup-menu>
      <div class="spot"></div>
      <div class="cursor">${pic(15, 23, svg`<path d="M1 1v17l4-4 3 7 3-1-3-7h6z" fill="#fff" stroke="#000"/>`)}</div>
    `;
  }
}
